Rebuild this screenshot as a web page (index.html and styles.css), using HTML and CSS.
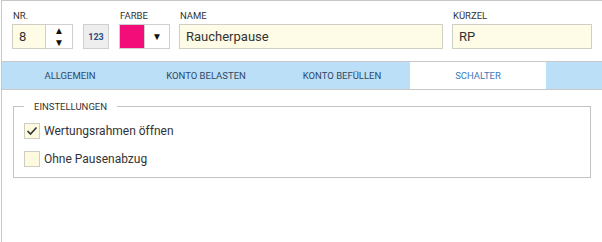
FILE: index.html
```html
<!DOCTYPE html>
<html lang="de">

<head>
    <meta charset="UTF-8">
    <title>Schalter</title>
    <link rel="stylesheet" href="styles.css">
</head>

<body>
    <div class="panel">
        <!-- Kopfzeile mit Feldern -->
        <div class="header">
            <div class="field">
                <label class="caption">Nr.</label>
                <div class="number">
                    <input class="input nr" type="text" value="8">
                    <div class="spinner">
                        <span class="arrow">&#9650;</span>
                        <span class="arrow">&#9660;</span>
                    </div>
                </div>
            </div>
            <button class="btn-123">123</button>
            <div class="field">
                <label class="caption">Farbe</label>
                <div class="color">
                    <span class="swatch"></span>
                    <span class="drop">&#9660;</span>
                </div>
            </div>
            <div class="field">
                <label class="caption">Name</label>
                <input class="input name" type="text" value="Raucherpause">
            </div>
            <div class="field">
                <label class="caption">Kürzel</label>
                <input class="input short" type="text" value="RP">
            </div>
        </div>

        <!-- Tabs -->
        <div class="tabs">
            <div class="tab">Allgemein</div>
            <div class="tab">Konto belasten</div>
            <div class="tab">Konto befüllen</div>
            <div class="tab active">Schalter</div>
        </div>

        <!-- Inhalt -->
        <fieldset class="settings">
            <legend>Einstellungen</legend>
            <label class="check">
                <span class="box checked">
                    <svg width="12" height="10" viewBox="0 0 12 10">
                        <path d="M1.5 5 L4.5 8 L10.5 1.5" fill="none" stroke="#333" stroke-width="1.6" />
                    </svg>
                </span>
                Wertungsrahmen öffnen
            </label>
            <label class="check">
                <span class="box"></span>
                Ohne Pausenabzug
            </label>
        </fieldset>
    </div>
</body>

</html>
```

FILE: styles.css
```css
body {
    margin: 0;
    font-family: Roboto, 'Liberation Sans', sans-serif;
    color: #333;
    background: #fff;
}

.panel {
    margin-left: 1px;
    height: 241px;
    border-top: 1px solid #c8c8c8;
    border-left: 1px solid #c8c8c8;
}

/* Kopfzeile */
.header {
    display: flex;
    align-items: flex-end;
    padding: 9px 0 12px 10px;
}

.field {
    display: flex;
    flex-direction: column;
    margin-right: 9px;
}

.caption {
    font-size: 9.5px;
    line-height: 12px;
    text-transform: uppercase;
    color: #333;
    margin: 0 0 2px 1px;
}

.input {
    box-sizing: border-box;
    height: 25px;
    border: 1px solid #cfcfc4;
    background: #fefce6;
    font-family: Roboto, 'Liberation Sans', sans-serif;
    font-size: 13px;
    color: #333;
    padding: 0 0 0 6px;
    outline: none;
}

.number {
    display: flex;
}

.nr {
    width: 34px;
}

.spinner {
    box-sizing: border-box;
    width: 27px;
    height: 25px;
    border: 1px solid #cfcfcf;
    border-left: none;
    display: flex;
    flex-direction: column;
    align-items: center;
    justify-content: center;
    gap: 2px;
}

.arrow {
    font-size: 10px;
    line-height: 10px;
    color: #111;
}

.btn-123 {
    box-sizing: border-box;
    width: 26px;
    height: 25px;
    margin: 0 10px 0 1px;
    padding: 0;
    border: 1px solid #cfcfcf;
    background: #eeeeee;
    color: #2b4c7e;
    font-family: Roboto, 'Liberation Sans', sans-serif;
    font-size: 9px;
    font-weight: bold;
}

.color {
    display: flex;
    box-sizing: border-box;
    width: 51px;
    height: 25px;
    border: 1px solid #cfcfcf;
}

.swatch {
    width: 24px;
    background: #f20d78;
    border-right: 1px solid #cfcfcf;
}

.drop {
    flex: 1;
    text-align: center;
    font-size: 10px;
    line-height: 24px;
    color: #111;
}

.name {
    width: 264px;
}

.short {
    width: 140px;
}

/* Tabs */
.tabs {
    display: flex;
    height: 27px;
    background: #bcdff8;
    border-top: 1px solid #c8c8c8;
    border-bottom: 1px solid #c8c8c8;
}

.tab {
    width: 136px;
    display: flex;
    align-items: center;
    justify-content: center;
    font-size: 9.5px;
    text-transform: uppercase;
    color: #2d4865;
}

.tab.active {
    background: #fff;
    color: #3b7ab8;
}

/* Einstellungen */
.settings {
    margin: 11px 11px 0 11px;
    padding: 4px 10px 10px 10px;
    border: 1px solid #c3c3c3;
}

.settings legend {
    padding: 0 10px;
    font-size: 9.5px;
    text-transform: uppercase;
    color: #333;
}

.check {
    display: flex;
    align-items: center;
    height: 16px;
    margin-top: 12px;
    font-size: 12px;
    color: #333;
}

.check:first-of-type {
    margin-top: 7px;
}

.box {
    box-sizing: border-box;
    width: 16px;
    height: 16px;
    margin-right: 4px;
    border: 1px solid #cdcdc2;
    background: #fdfae0;
    display: flex;
    align-items: center;
    justify-content: center;
}
```
